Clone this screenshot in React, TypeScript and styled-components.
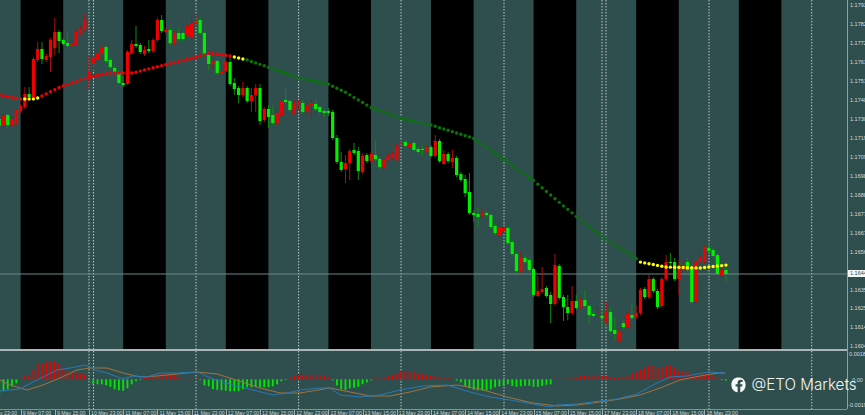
import React from "react";
import styled, { createGlobalStyle } from "styled-components";

const GlobalStyle = createGlobalStyle`
    html, body {
        margin: 0;
        padding: 0;
        background: #2f4f4f;
    }
`;

const Terminal = styled.div`
    position: relative;
    display: flex;
    width: 865px;
    height: 415px;
    overflow: hidden;
    background: #2f4f4f;
    font-family: "Liberation Sans", Arial, sans-serif;
`;

const PlotColumn = styled.div`
    display: flex;
    flex-direction: column;
    width: 847px;
    flex: none;
`;

const Chart = styled.svg`
    display: block;
    flex: none;
    filter: blur(0.25px);
`;

const Divider = styled.div`
    height: 2px;
    flex: none;
    background: #aab5b5;
`;

const TimeAxis = styled.div`
    display: flex;
    flex: none;
    height: 6px;
    margin-left: -13.5px;
    border-top: 1px solid #7f9494;
`;

const TimeTick = styled.span`
    flex: none;
    width: 34.2px;
    padding-left: 1px;
    box-sizing: border-box;
    border-left: 1px solid #9fb0b0;
    color: #cfd8d8;
    font-size: 5.2px;
    line-height: 6px;
    white-space: nowrap;
`;

const AxisColumn = styled.div`
    display: flex;
    flex-direction: column;
    flex: 1;
    height: 409px;
    border-left: 1px solid #8fa3a3;
    overflow: hidden;
`;

const PriceAxis = styled.div`
    display: grid;
    grid-auto-rows: 18.94px;
    height: 351px;
    flex: none;
    margin-top: -3.5px;
`;

const AxisLabel = styled.span<{ $current?: boolean }>`
    display: block;
    align-self: center;
    height: 7px;
    padding-left: 2px;
    color: ${(p) => (p.$current ? "#2f4f4f" : "#d3dcdc")};
    background: ${(p) => (p.$current ? "#f4f6f6" : "transparent")};
    margin-top: ${(p) => (p.$current ? "4px" : "0")};
    font-size: 5.5px;
    line-height: 7px;
    white-space: nowrap;
`;

const IndicatorAxis = styled.div`
    display: flex;
    flex-direction: column;
    justify-content: space-between;
    flex: 1;
    padding-top: 3.5px;
`;

const Watermark = styled.div`
    position: absolute;
    left: 731px;
    top: 374px;
    display: flex;
    align-items: center;
    gap: 5.5px;
    color: #f2f5f5;
    font-family: Inter, "Noto Sans", sans-serif;
    font-size: 15.2px;
    font-weight: 300;
    line-height: 22px;
    white-space: nowrap;
`;

type Candle = [string, number, number, number, number];

const candles: Candle[] = [
    ["g",119,126,117,128],["r",116,126,114,129],["g",115,125,113,128],["r",119,125,117,127],["r",110,124,109,126],
    ["r",106,111,104,113],["r",94,107,87,109],["g",94,97,87,99],["r",59,97,57,99],["r",49,60,42,62],
    ["g",49,59,42,64],["r",56,60,54,62],["r",40,57,38,72],["r",32,48,18,55],["g",32,41,30,53],
    ["g",40,44,38,46],["g",43,46,33,48],["r",43,46,41,47],["r",32,45,28,46],["r",30,33,26,35],
    ["r",19,30,14,32],["r",71,80,55,90],["r",58,64,56,70],["r",53,60,50,62],["r",48,54,46,60],
    ["g",47,61,45,63],["g",60,67,58,69],["g",68,72,66,74],["g",73,83,70,84],["g",83,85,76,87],
    ["r",52,84,50,85],["r",44,53,40,55],["g",44,46,26,48],["g",45,52,43,54],["r",50,54,46,56],
    ["g",49,51,40,53],["r",40,51,38,53],["r",20,40,18,42],["g",20,31,15,33],["r",30,32,28,34],
    ["g",30,43,28,45],["r",33,43,31,45],["g",33,39,28,41],["g",33,39,31,41],["r",26,36,24,38],
    ["r",24,38,18,40],["r",22,24,14,26],["g",20,33,18,35],["g",33,55,31,57],["g",55,64,53,70],
    ["r",62,64,60,70],["g",61,73,59,75],["r",72,74,70,76],["r",62,71,58,73],["g",62,84,56,86],
    ["g",83,89,78,95],["g",88,95,86,103],["r",88,95,82,97],["g",88,101,86,103],["r",95,101,88,112],
    ["r",88,95,84,112],["g",88,121,84,125],["r",109,120,107,122],["g",109,117,105,128],["g",115,123,105,125],
    ["r",113,123,111,125],["r",101,115,99,117],["g",100,102,89,104],["g",101,110,99,112],["r",103,114,100,116],
    ["r",102,104,100,110],["g",103,112,100,114],["r",105,112,103,114],["r",103,105,99,118],["g",104,109,100,111],
    ["g",107,112,105,114],["g",111,113,109,117],["g",111,113,108,116],["g",112,138,110,140],["g",138,162,135,164],
    ["g",162,170,152,172],["r",163,169,155,183],["r",151,163,149,180],["g",150,153,143,155],["g",151,171,147,180],
    ["r",156,172,153,174],["g",155,161,153,163],["r",154,161,152,163],["g",155,159,141,161],["g",159,167,157,169],
    ["r",160,167,158,169],["r",156,160,154,162],["r",154,158,152,160],["r",146,160,144,162],["r",143,144,141,146],
    ["g",142,146,140,148],["r",143,147,141,149],["g",143,150,141,152],["g",149,152,147,154],["g",149,150,146,156],
    ["r",147,152,145,154],["g",147,156,145,158],["r",141,156,135,158],["g",141,161,139,163],["r",154,164,150,165],
    ["g",154,161,152,163],["r",158,162,150,168],["g",158,175,156,177],["g",174,180,172,182],["g",179,193,175,197],
    ["g",192,213,173,215],["g",213,215,210,222],["g",214,217,208,227],["r",213,216,210,218],["g",213,215,211,218],
    ["g",215,227,213,229],["g",226,233,224,235],["r",227,236,221,237],["r",228,231,226,233],["g",228,243,226,245],
    ["g",242,254,240,256],["g",254,271,252,273],["r",257,271,251,273],["g",258,262,256,264],["g",260,270,258,272],
    ["g",269,295,267,297],["r",291,296,276,297],["r",289,292,267,294],["g",288,296,286,298],["g",295,304,292,323],
    ["r",265,304,254,306],["g",266,298,264,300],["g",297,307,295,321],["g",307,313,295,320],["r",301,313,286,315],
    ["g",301,308,295,310],["r",299,307,297,309],["g",300,306,290,308],["g",306,315,304,324],["g",314,316,310,318],
    ["r",315,316,307,318],["g",316,318,310,328],["r",312,322,302,325],["g",312,331,308,333],["g",330,334,318,340],
    ["r",331,341,328,343],["g",323,327,320,329],["r",314,327,310,329],["g",315,318,303,320],["r",313,317,305,319],
    ["r",290,313,288,315],["g",289,297,287,299],["r",279,297,275,299],["g",279,291,277,293],["g",291,307,289,309],
    ["r",279,306,277,308],["r",262,279,255,281],["g",262,263,253,265],["g",262,279,258,281],["r",265,279,260,295],
    ["r",266,269,260,271],["g",262,270,258,272],["g",268,302,266,304],["r",262,302,260,304],["r",257,262,255,264],
    ["r",247,262,245,264],["g",248,251,243,253],["g",250,256,248,258],["g",255,274,253,276],["r",270,275,264,278],
    ["g",270,274,268,282],
];

const macd = [
    -16,-12,-10,-7,-4,.5,3,4.5,10,15.5,16,17,17.5,17.5,16,11,8.5,7.5,6.5,5.5,5,0,-4.5,-5,-5,-6,-7.5,-10,-11,-11.5,-9,-5,-2,-.5,
    1.5,2.5,3,4.5,5.5,5.5,4.5,4,1.5,.5,.5,.5,.5,0,-6,-7,-10,-10.5,-11,-11.5,-12,-12,-12,-10,-8,-8,-8,-8,-8,-8,-7,-5,-2,0,1.5,3.5,4.5,
    4.5,4.5,4.5,4.5,3.5,3,2.5,-1,-6,-10,-10.5,-9,-8.5,-7.5,-5,-3,-1,1,1,2,3,4.5,6,8.5,8.5,8.5,7,6,5,4.5,3.5,3.5,1.5,1.5,1,.5,
    -1.3,-3,-6.5,-9,-10.5,-11,-11,-11,-10,-8,-7,-6.5,-5,-6.5,-7.5,-7,-6.5,-6.5,-7.5,-7.5,-6.5,-5.5,-5,.5,.5,.5,1,1,2,3.5,4,3.5,3.5,3.5,
    3.5,3.5,2,1.5,2,2.5,4,6,7.5,10,11,13.5,14,12,11.5,13.5,13.5,11,8.5,8.5,7.5,4.5,3.5,4.5,5,6,4.5,2,0,-1.3,
];

const maPoints = [
    [-1,95],[20,99],[33,99],[38,98],[60,87],[89,77],[110,73],[133,73],[160,66],[197,57],[210,53],[230,56],[247,60],[268,67],
    [299,78],[328,84],[345,92],[370,107],[400,118],[431,125],[473,138],[499,156],[533,180],[560,203],[593,230],[615,245],
    [637,259],[640,262],[666,267],[700,268],[727,265],
];

const bluePts = "0,391 10,390 20,389 33,382 43,377 57,370 70,368 85,365 95,370 107,373 123,379 133,376 147,377 160,373 177,373 197,372 213,379 233,385 253,390 273,395 287,393 300,390 320,388 330,388 340,395 360,397 380,395 400,390 423,386 447,385 470,392 490,397 510,400 533,404 550,407 557,405 577,404 600,401 617,399 637,394 653,385 670,377 687,376 708,372 725,373";
const orangePts = "0,380 10,385 27,390 43,385 60,378 77,370 90,368 107,368 123,373 140,377 157,376 177,374 197,372 217,374 233,379 260,388 280,393 300,393 330,388 350,392 370,396 390,396 410,392 430,387 457,385 480,389 507,397 533,403 557,406 577,405 600,402 620,399 640,395 660,388 680,380 700,376 718,373 725,373";

const prices = ["1.1793","1.1782","1.1772","1.1761","1.1751","1.1740","1.1730","1.1719","1.1709","1.1698","1.1688","1.1677","1.1667","1.1656","1.1644","1.1635","1.1625","1.1614","1.1604"];

const times = ["8 May 23:00","9 May 07:00","9 May 15:00","10 May 23:00","11 May 07:00","11 May 15:00","11 May 23:00","12 May 07:00","12 May 15:00","12 May 23:00","13 May 07:00","13 May 15:00","13 May 23:00","14 May 07:00","14 May 15:00","14 May 23:00","15 May 07:00","15 May 15:00","17 May 23:00","18 May 07:00","18 May 15:00","18 May 23:00"];

const gridLines = [89, 93.5, 196, 298.6, 401, 504, 602, 606, 709, 811.7];

const barX = (i: number) => 4.275 * i - 0.8;

function maY(x: number) {
    for (let k = 1; k < maPoints.length; k++) {
        const [x1, y1] = maPoints[k];
        const [x0, y0] = maPoints[k - 1];
        if (x <= x1) return y0 + ((x - x0) / (x1 - x0)) * (y1 - y0);
    }
    return 265;
}

function maColor(x: number) {
    if (x > 22 && x < 39) return "#ffff00";
    if (x <= 232) return "#f00000";
    if (x < 246) return "#ffff00";
    if (x < 640) return "#087508";
    return "#ffff00";
}

function Grid({ y1, y2 }: { y1: number; y2: number }) {
    return (
        <>
            {gridLines.map((x) => (
                <line key={x} x1={x} x2={x} y1={y1} y2={y2} stroke="#c2cdcd" strokeWidth="1" strokeDasharray="1.4 1.6" />
            ))}
        </>
    );
}

function PriceChart() {
    return (
        <Chart width="847" height="349" viewBox="0 0 847 349">
            {[0, 1, 2, 3, 4, 5, 6, 7].map((k) => (
                <rect key={k} x={20.6 + 102.6 * k} y="0" width="42.6" height="349" fill="#000" />
            ))}
            <Grid y1={0} y2={349} />
            <line x1="0" x2="847" y1="274" y2="274" stroke="#6f8787" strokeWidth="1.2" />
            {candles.map(([c, top, bottom, wickTop, wickBottom], i) => (
                <g key={i}>
                    <line x1={barX(i)} x2={barX(i)} y1={wickTop} y2={wickBottom} stroke={c === "r" ? "#a81010" : "#0c8c0c"} strokeWidth="1" />
                    <rect x={barX(i) - 1.6} y={top} width="3.2" height={bottom - top} fill={c === "r" ? "#f00000" : "#00f000"} />
                </g>
            ))}
            {candles.map((_, i) => (
                <circle key={i} cx={barX(i)} cy={maY(barX(i))} r="1.7" fill={maColor(barX(i))} />
            ))}
        </Chart>
    );
}

function MacdChart() {
    return (
        <Chart width="847" height="58" viewBox="0 351 847 58">
            <Grid y1={351} y2={409} />
            {macd.map((v, i) => (
                <rect
                    key={i}
                    x={barX(i) - 0.9}
                    y={v > 0 ? 379.3 - v : 379.3}
                    width="1.8"
                    height={Math.max(Math.abs(v), 0.8)}
                    fill={v > 0 ? "#e80000" : "#00e800"}
                />
            ))}
            <polyline points={orangePts} fill="none" stroke="#a0743f" strokeWidth="1" />
            <polyline points={bluePts} fill="none" stroke="#2a78b4" strokeWidth="1" />
        </Chart>
    );
}

function Logo() {
    return (
        <svg width="15" height="16" viewBox="0 0 15 16">
            <path
                fill="#f7f8f8"
                d="M7.5 .6C11.8 .6 14.6 3.3 14.6 7.8C14.6 11.6 12.6 14.6 9.3 15.3V9.6H11.2L11.5 7.3H9.3V6.1C9.3 5.4 9.6 5 10.4 5H11.6V3C11.2 2.9 10.4 2.8 9.7 2.8C7.8 2.8 6.6 4 6.6 6V7.3H4.6V9.6H6.6V15.3C2.8 14.8 .4 11.8 .4 7.8C.4 3.3 3.2 .6 7.5 .6Z"
            />
        </svg>
    );
}

function App() {
    return (
        <Terminal>
            <GlobalStyle />
            <PlotColumn>
                <PriceChart />
                <Divider />
                <MacdChart />
                <TimeAxis>
                    {times.map((t) => (
                        <TimeTick key={t}>{t}</TimeTick>
                    ))}
                </TimeAxis>
            </PlotColumn>
            <AxisColumn>
                <PriceAxis>
                    {prices.map((p) => (
                        <AxisLabel key={p} $current={p === "1.1644"}>{p}</AxisLabel>
                    ))}
                </PriceAxis>
                <IndicatorAxis>
                    <AxisLabel>0.0018</AxisLabel>
                    <AxisLabel>0.00</AxisLabel>
                    <AxisLabel>-0.0019</AxisLabel>
                </IndicatorAxis>
            </AxisColumn>
            <Watermark>
                <Logo />
                <span>@ETO Markets</span>
            </Watermark>
        </Terminal>
    );
}

export default App;
